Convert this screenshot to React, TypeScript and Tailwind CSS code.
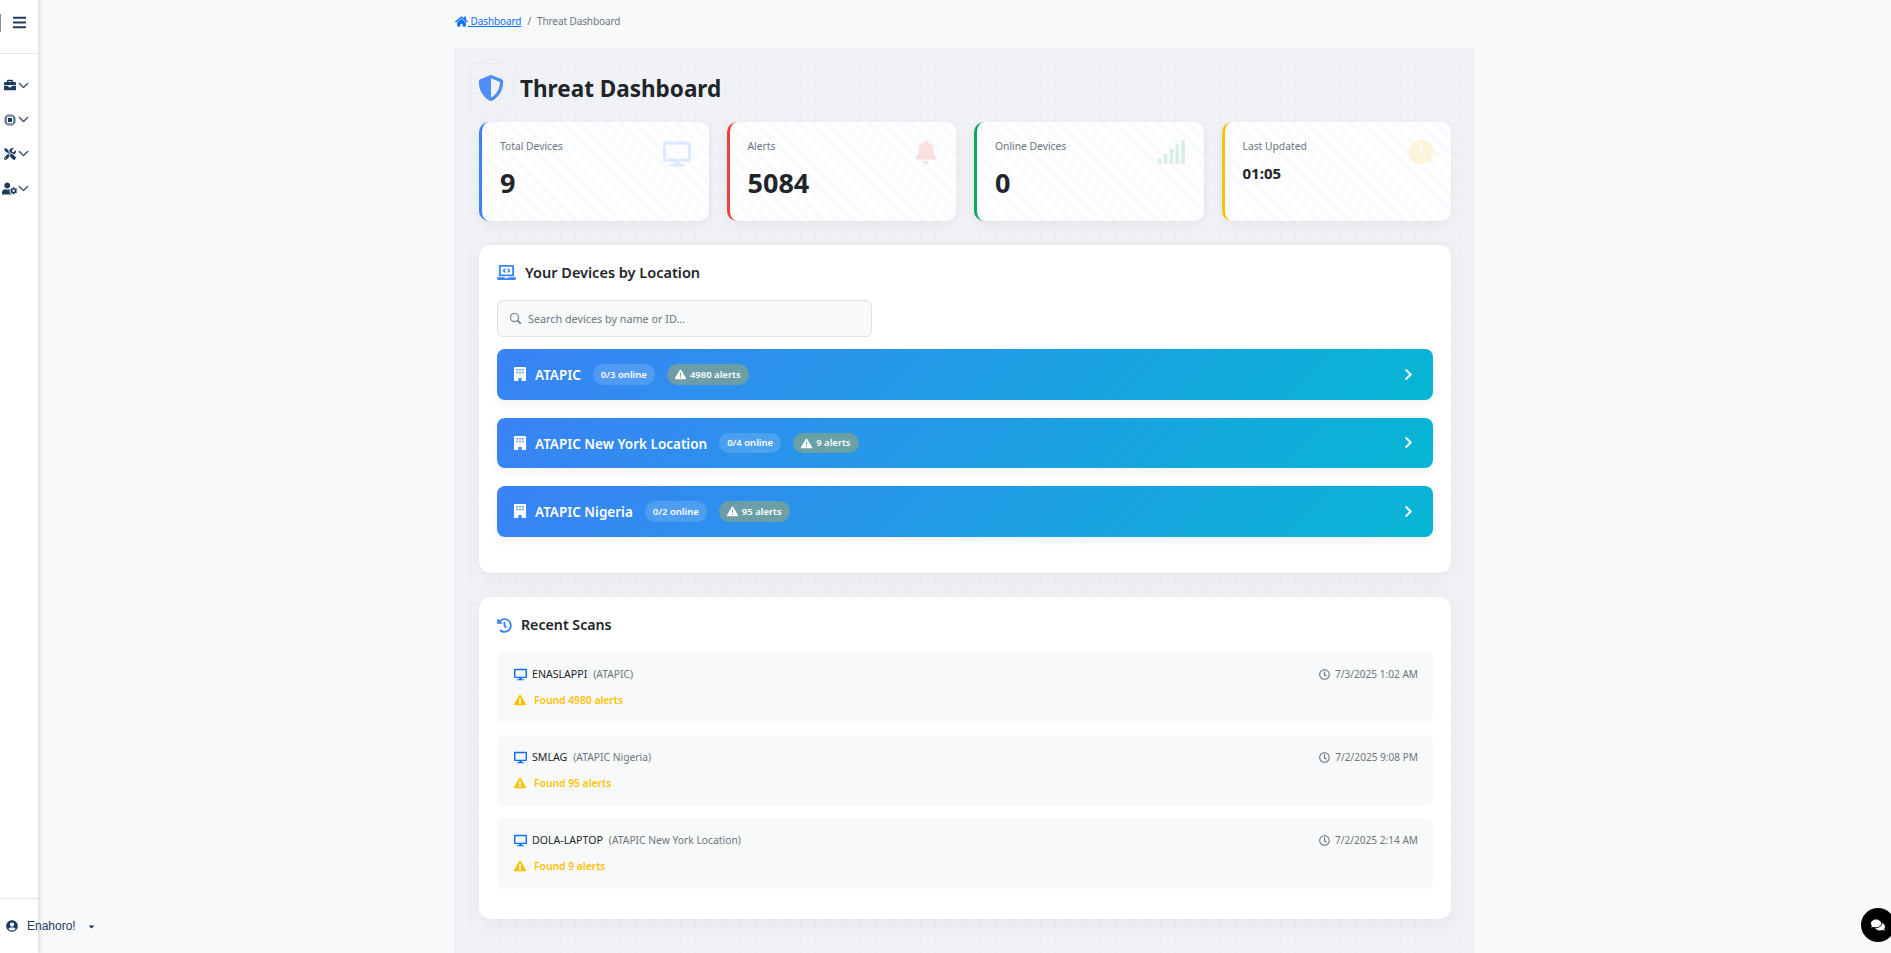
import React from 'react';
import {
  FaBars, FaBell, FaBriefcase, FaCaretDown, FaChevronRight, FaComments, FaDesktop,
  FaExclamationTriangle, FaHistory, FaHome, FaLaptopCode, FaRegClock, FaShieldAlt, FaSignal,
  FaTools, FaUserCircle, FaUserCog,
} from 'react-icons/fa';
import { FaClock, FaTriangleExclamation } from 'react-icons/fa6';
import { BsChevronDown, BsSearch } from 'react-icons/bs';

const locations = [
  { name: 'ATAPIC', online: '0/3 online', alerts: '4980 alerts' },
  { name: 'ATAPIC New York Location', online: '0/4 online', alerts: '9 alerts' },
  { name: 'ATAPIC Nigeria', online: '0/2 online', alerts: '95 alerts' },
];

const scans = [
  { host: 'ENASLAPPI', location: '(ATAPIC)', time: '7/3/2025 1:02 AM', found: 'Found 4980 alerts' },
  { host: 'SMLAG', location: '(ATAPIC Nigeria)', time: '7/2/2025 9:08 PM', found: 'Found 95 alerts' },
  { host: 'DOLA-LAPTOP', location: '(ATAPIC New York Location)', time: '7/2/2025 2:14 AM', found: 'Found 9 alerts' },
];

function NavItem({ children }: { children: React.ReactNode }) {
  return (
    <div className="flex h-[34.4px] items-center pl-[2px]">
      <span className="flex w-[15px] shrink-0 justify-center">{children}</span>
      <BsChevronDown size={11} className="ml-[1px] shrink-0" strokeWidth={1} />
    </div>
  );
}

function ChipIcon() {
  return (
    <svg viewBox="0 0 12 12" width={12} height={12} fill="none" stroke="currentColor">
      <rect x="2" y="2" width="8" height="8" rx="0.8" strokeWidth="1.2" />
      <rect x="4" y="4" width="4" height="4" fill="currentColor" stroke="none" />
      <path strokeWidth="0.7" d="M4 0v1.5M6 0v1.5M8 0v1.5M4 10.5V12M6 10.5V12M8 10.5V12M0 4h1.5M0 6h1.5M0 8h1.5M10.5 4H12M10.5 6H12M10.5 8H12" />
    </svg>
  );
}

function Sidebar() {
  return (
    <aside className="relative z-10 flex h-full w-[38px] shrink-0 flex-col bg-white text-[#1e3a5f] shadow-[2px_0_4px_rgba(0,0,0,0.12)]">
      <div className="flex h-[54px] items-center border-b border-[#e3e6ef] pb-[8px]">
        <div className="h-[18px] w-[1px] bg-[#8a8f96]" />
        <FaBars size={15} className="ml-[11px]" />
      </div>
      <nav className="flex-1 pt-[14px]">
        <NavItem><FaBriefcase size={12} /></NavItem>
        <NavItem><ChipIcon /></NavItem>
        <NavItem><FaTools size={12} /></NavItem>
        <NavItem><FaUserCog size={15} /></NavItem>
      </nav>
      <div className="flex h-[55px] items-center border-t border-[#e5e5e5] pl-[6px] [font-family:'Liberation_Sans',sans-serif]">
        <FaUserCircle size={12} className="shrink-0" />
        <span className="ml-[9px] whitespace-nowrap text-[12px]">Enahoro!</span>
        <FaCaretDown size={9} className="ml-[11px] shrink-0" />
      </div>
    </aside>
  );
}

function BuildingIcon() {
  return (
    <svg viewBox="0 0 12 14" width={12} height={14} className="shrink-0" fill="currentColor">
      <path
        fillRule="evenodd"
        d="M1 0h10a1 1 0 0 1 1 1v13H7.6v-3H4.4v3H0V1a1 1 0 0 1 1-1zM2.4 2v1.4h1.5V2zM5.25 2v1.4h1.5V2zM8.1 2v1.4h1.5V2zM2.4 4.8v1.4h1.5V4.8zM5.25 4.8v1.4h1.5V4.8zM8.1 4.8v1.4h1.5V4.8z"
      />
    </svg>
  );
}

function StatCard({ label, value, border, small, children }: { label: string; value: string; border: string; small?: boolean; children: React.ReactNode }) {
  return (
    <div className={`flex h-[99px] justify-between rounded-[10px] border-l-[3px] bg-white bg-[repeating-linear-gradient(45deg,transparent_0_5px,#fafbff_5px_10px)] pl-[18px] pr-[18px] pt-[18px] shadow-[0_4px_12px_rgba(0,0,0,0.05)] ${border}`}>
      <div>
        <div className="text-[10.3px] leading-[13px] text-[#6c757d]">{label}</div>
        {small ? (
          <div className="mt-[10px] text-[15px] font-bold leading-[20px] text-[#212529]">{value}</div>
        ) : (
          <div className="mt-[12px] text-[27px] font-bold leading-[36px] text-[#212529]">{value}</div>
        )}
      </div>
      {children}
    </div>
  );
}

function LocationRow({ name, online, alerts }: { name: string; online: string; alerts: string }) {
  return (
    <div className="mb-[18px] flex h-[50.5px] items-center rounded-[8px] bg-[linear-gradient(135deg,#3b82f6,#06b6d4)] pl-[17px] pr-[18px] text-white shadow-[0_4px_12px_rgba(0,0,0,0.05)]">
      <BuildingIcon />
      <span className="ml-[9px] pt-[2px] text-[13.5px] font-semibold">{name}</span>
      <span className="ml-[12px] flex h-[20.5px] items-center rounded-full bg-white/15 px-[8px] pt-[1px] text-[9.5px] font-semibold">{online}</span>
      <span className="ml-[12px] flex h-[20.5px] items-center rounded-full bg-[rgba(255,193,7,0.3)] px-[8px] pt-[1px] text-[9.5px] font-semibold">
        <FaTriangleExclamation size={11} className="mr-[4px]" />
        {alerts}
      </span>
      <FaChevronRight size={13} className="ml-auto" />
    </div>
  );
}

function ScanItem({ host, location, time, found }: { host: string; location: string; time: string; found: string }) {
  return (
    <div className="mb-[12px] rounded-[6px] bg-[#f8f9fa] pb-[15px] pl-[17px] pr-[15px] pt-[14px]">
      <div className="flex h-[16px] items-center">
        <FaDesktop size={13} className="text-[#0d6efd]" />
        <span className="ml-[5px] pt-[1px] text-[10.6px] text-[#212529]">{host}</span>
        <span className="ml-[6px] pt-[1px] text-[10.3px] text-[#6c757d]">{location}</span>
        <span className="ml-auto flex items-center text-[10.1px] text-[#6c757d]">
          <FaRegClock size={11} className="mr-[5px]" />
          <span className="pt-[1px]">{time}</span>
        </span>
      </div>
      <div className="mt-[10px] flex h-[16px] items-center text-[10.3px] font-semibold text-[#ffc107]">
        <FaExclamationTriangle size={12} />
        <span className="ml-[8px] pt-[1px]">{found}</span>
      </div>
    </div>
  );
}

export default function App() {
  return (
    <div className="relative flex h-screen overflow-hidden bg-[#f8f9fb] [font-family:'Noto_Sans',sans-serif]">
      <Sidebar />
      <main className="flex-1 pl-[417px]">
        <div className="flex h-[48px] w-[1020px] items-center pb-[6px] text-[10px] tracking-[-0.1px]">
          <a className="flex items-center text-[#0d6efd] underline">
            <FaHome size={13} />
            <span className="whitespace-pre"> Dashboard</span>
          </a>
          <span className="mx-[6px] text-[#6c757d]">/</span>
          <span className="text-[#6c757d]">Threat Dashboard</span>
        </div>

        <div className="h-[905px] w-[1020px] bg-[#f0f2f6] bg-[linear-gradient(#eaecf1_1px,transparent_1px),linear-gradient(90deg,#eaecf1_1px,transparent_1px)] bg-[size:15px_15px] px-[24px] pt-[24px]">
          <div className="relative mb-[18px] flex h-[32px] items-center">
            <div className="absolute left-[-11px] top-[-13px] h-[58px] w-[45px] rounded-full border border-[#e9ebf0]" />
            <FaShieldAlt size={26} className="ml-[-1px] text-[#4f8ef7]" />
            <h1 className="ml-[16px] pt-[2px] text-[22.5px] font-bold text-[#212529]">Threat Dashboard</h1>
          </div>

          <div className="mb-[24px] grid grid-cols-4 gap-[18px]">
            <StatCard label="Total Devices" value="9" border="border-[#3b82f6]">
              <FaDesktop size={28} className="text-[#3b82f6] opacity-15" />
            </StatCard>
            <StatCard label="Alerts" value="5084" border="border-[#ea4335]">
              <FaBell size={24} className="text-[#ea4335] opacity-15" />
            </StatCard>
            <StatCard label="Online Devices" value="0" border="border-[#10a560]">
              <FaSignal preserveAspectRatio="none" className="h-[24px] w-[29px] text-[#10a560] opacity-15" />
            </StatCard>
            <StatCard label="Last Updated" value="01:05" border="border-[#ffc107]" small>
              <FaClock size={24} className="text-[#ffc107] opacity-15" />
            </StatCard>
          </div>

          <section className="mb-[24px] rounded-[12px] bg-white px-[18px] pb-[18.5px] pt-[18px] shadow-[0_4px_20px_rgba(0,0,0,0.05)]">
            <div className="mb-[19px] flex h-[18px] items-center">
              <FaLaptopCode size={19} className="text-[#3b82f6]" />
              <h2 className="ml-[9px] pt-[2px] text-[14.5px] font-semibold text-[#212529]">Your Devices by Location</h2>
            </div>
            <label className="mb-[12px] flex h-[37px] w-[375px] items-center rounded-[6px] border border-[#dee2e6] bg-[#f8f9fa] pl-[12px]">
              <BsSearch size={11} className="shrink-0 text-[#6c757d]" strokeWidth={0.5} />
              <input
                className="ml-[7px] w-full bg-transparent pt-[1px] text-[10.8px] outline-none placeholder:text-[#6c757d]"
                placeholder="Search devices by name or ID..."
              />
            </label>
            {locations.map((l) => (
              <LocationRow key={l.name} {...l} />
            ))}
          </section>

          <section className="rounded-[12px] bg-white px-[18px] pb-[18px] pt-[18px] shadow-[0_4px_20px_rgba(0,0,0,0.05)]">
            <div className="mb-[17px] flex h-[20px] items-center">
              <FaHistory size={15} className="text-[#3b82f6]" />
              <h2 className="ml-[9px] text-[14.2px] font-semibold text-[#212529]">Recent Scans</h2>
            </div>
            {scans.map((s) => (
              <ScanItem key={s.host} {...s} />
            ))}
          </section>
        </div>
      </main>

      <button className="absolute bottom-[11px] right-[-4px] flex h-[34px] w-[34px] items-center justify-center rounded-full bg-black text-white">
        <FaComments size={14} />
      </button>
    </div>
  );
}
